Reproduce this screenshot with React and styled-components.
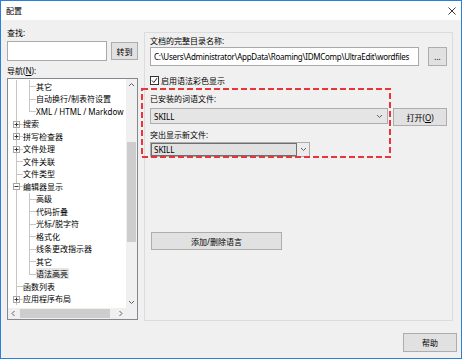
import React from 'react';
import styled, { createGlobalStyle } from 'styled-components';

const GlobalStyle = createGlobalStyle`
  html, body {
    margin: 0;
    padding: 0;
    background: #fff;
  }
  body {
    font-family: "Noto Sans", "Noto Sans CJK SC", sans-serif;
    font-size: 8px;
    color: #000;
  }
  * {
    box-sizing: border-box;
  }
`;

const Window = styled.div`
  width: 462px;
  height: 359px;
  border: 1px solid #2b7fd6;
  display: flex;
  flex-direction: column;
  background: #f0f0f0;
`;

const TitleBar = styled.div`
  height: 19px;
  background: #fff;
  display: flex;
  align-items: center;
  justify-content: space-between;
  padding: 0 5px;
`;

const Main = styled.div`
  display: flex;
  height: 301px;
  padding: 0 8px 0 6px;
`;

const LeftPane = styled.div`
  width: 131px;
  display: flex;
  flex-direction: column;
  padding-top: 7px;
`;

const FieldLabel = styled.div`
  height: 11px;
  line-height: 11px;
  white-space: nowrap;
  margin-top: ${(p) => p.$top || 0}px;
  u {
    text-decoration: underline;
  }
`;

const SearchRow = styled.div`
  display: flex;
  align-items: center;
  justify-content: space-between;
  margin-top: 3px;
`;

const TextBox = styled.div`
  width: ${(p) => p.$w}px;
  height: ${(p) => p.$h}px;
  border: 1px solid #a9a9a9;
  background: #fff;
  padding-left: 3px;
  display: flex;
  align-items: center;
  white-space: nowrap;
  overflow: hidden;
  letter-spacing: ${(p) => p.$tight ? '-0.27px' : 'normal'};
`;

const Button = styled.div`
  width: ${(p) => p.$w}px;
  height: ${(p) => p.$h || 18}px;
  margin-left: ${(p) => p.$left || 0}px;
  margin-top: ${(p) => p.$top || 0}px;
  background: #e1e1e1;
  border: 1px solid #adadad;
  display: flex;
  align-items: center;
  justify-content: center;
  white-space: nowrap;
  flex: none;
  u {
    text-decoration: underline;
  }
`;

const Tree = styled.div`
  margin-top: 2px;
  height: 242px;
  border: 1px solid #828790;
  background: #fff;
  display: grid;
  grid-template-columns: 1fr 11px;
  grid-template-rows: 1fr 11px;
  overflow: hidden;
`;

const TreeBody = styled.div`
  overflow: hidden;
  padding: 1px 0 0 2px;
`;

const TreeRow = styled.div`
  height: 12.5px;
  display: flex;
  align-items: center;
  white-space: nowrap;
`;

const Guide = styled.span`
  position: relative;
  width: 13px;
  height: 100%;
  flex: none;
  &::before {
    content: ${(p) => (p.$kind === 'blank' ? 'none' : "''")};
    position: absolute;
    left: 6px;
    top: 0;
    bottom: ${(p) => (p.$kind === 'end' ? '50%' : '0')};
    width: 1px;
    background: #c6c6c6;
  }
  &::after {
    content: ${(p) => (p.$kind === 'line' || p.$kind === 'blank' ? 'none' : "''")};
    position: absolute;
    left: 6px;
    right: 0;
    top: 6px;
    height: 1px;
    background: #c6c6c6;
  }
`;

const Expander = styled.span`
  position: absolute;
  z-index: 1;
  left: 3px;
  top: 3px;
  width: 7px;
  height: 7px;
  border: 1px solid #a5a5a5;
  background: #fff;
  display: flex;
  svg {
    display: block;
  }
`;

const NodeText = styled.span`
  padding: 0 1px 0 0;
  line-height: 11px;
  background: ${(p) => (p.$selected ? '#e6e6e6' : 'transparent')};
`;

const VScroll = styled.div`
  background: #f0f0f0;
  display: flex;
  flex-direction: column;
`;

const HScroll = styled.div`
  background: #f0f0f0;
  display: flex;
`;

const Arrow = styled.div`
  width: 11px;
  height: 11px;
  flex: none;
  display: flex;
  align-items: center;
  justify-content: center;
`;

const Track = styled.div`
  flex: 1;
  display: flex;
  flex-direction: ${(p) => (p.$vertical ? 'column' : 'row')};
  padding: ${(p) => (p.$vertical ? '0 1px' : '1px 0')};
`;

const Thumb = styled.div`
  background: #cdcdcd;
  ${(p) =>
    p.$vertical
      ? `margin-top: ${p.$offset}px; height: ${p.$size}px;`
      : `margin-left: ${p.$offset}px; width: ${p.$size}px;`}
`;

const Corner = styled.div`
  background: #f0f0f0;
`;

const RightPane = styled.div`
  margin-left: 6px;
  margin-top: 12px;
  width: 309px;
  height: 289px;
  border: 1px solid #dcdcdc;
  padding: 2px 5px 0 5px;
  display: flex;
  flex-direction: column;
`;

const PathRow = styled.div`
  display: flex;
  align-items: center;
  justify-content: space-between;
  margin-top: 1px;
`;

const CheckRow = styled.div`
  display: flex;
  align-items: center;
  gap: 2px;
  height: 10px;
  margin-top: 9px;
`;

const CheckBox = styled.span`
  width: 9px;
  height: 9px;
  border: 1px solid #333;
  background: #fff;
  display: flex;
  svg {
    display: block;
  }
`;

const Group = styled.div`
  position: relative;
  margin-top: 8px;
`;

const Annotation = styled.svg`
  position: absolute;
  left: -9px;
  top: -5px;
  pointer-events: none;
`;

const SelectRow = styled.div`
  display: flex;
  align-items: flex-start;
  justify-content: space-between;
  margin-top: 4px;
`;

const Select = styled.div`
  width: ${(p) => p.$w}px;
  height: ${(p) => p.$h}px;
  margin-top: ${(p) => p.$top || 0}px;
  background: #e5e5e5;
  border: 1px solid #adadad;
  display: flex;
  align-items: center;
  justify-content: space-between;
  padding: 0 4px 0 3px;
`;

const Combo = styled.div`
  width: 160px;
  height: 15px;
  margin-top: 2px;
  display: flex;
  border: 1px solid #adadad;
  background: #e5e5e5;
`;

const ComboField = styled.div`
  flex: 1;
  border: 1px solid #6f6f6f;
  background: #e1e1e1;
  display: flex;
  align-items: center;
  padding-left: 2px;
`;

const ComboArrow = styled.div`
  width: 12px;
  display: flex;
  align-items: center;
  justify-content: center;
  background: #ececec;
`;

const Footer = styled.div`
  display: flex;
  justify-content: flex-end;
  padding: 12px 4px 0 0;
`;

const Chevron = ({ dir = 'down', color = '#606060' }) => {
  const pts = {
    down: '1,2 3.5,4.5 6,2',
    up: '1,5 3.5,2.5 6,5',
    left: '4.5,1 2,3.5 4.5,6',
    right: '2.5,1 5,3.5 2.5,6',
  }[dir];
  return (
    <svg width="7" height="7" viewBox="0 0 7 7">
      <polyline points={pts} fill="none" stroke={color} strokeWidth="1" />
    </svg>
  );
};

const treeItems = [
  { guides: ['line', 'tee'], text: '其它' },
  { guides: ['line', 'tee'], text: '自动换行/制表符设置' },
  { guides: ['line', 'end'], text: 'XML / HTML / Markdow' },
  { guides: ['tee'], expander: '+', text: '搜索' },
  { guides: ['tee'], expander: '+', text: '拼写检查器' },
  { guides: ['tee'], expander: '+', text: '文件处理' },
  { guides: ['tee'], text: '文件关联' },
  { guides: ['tee'], text: '文件类型' },
  { guides: ['tee'], expander: '-', text: '编辑器显示' },
  { guides: ['line', 'tee'], text: '高级' },
  { guides: ['line', 'tee'], text: '代码折叠' },
  { guides: ['line', 'tee'], text: '光标/脱字符' },
  { guides: ['line', 'tee'], text: '格式化' },
  { guides: ['line', 'tee'], text: '线条更改指示器' },
  { guides: ['line', 'tee'], text: '其它' },
  { guides: ['line', 'end'], text: '语法高亮', selected: true },
  { guides: ['tee'], text: '函数列表' },
  { guides: ['tee'], expander: '+', text: '应用程序布局' },
];

const ExpanderIcon = ({ sign }) => (
  <Expander>
    <svg width="5" height="5" viewBox="0 0 5 5">
      <line x1="0.5" y1="2.5" x2="4.5" y2="2.5" stroke="#3a3a3a" strokeWidth="1" />
      {sign === '+' && <line x1="2.5" y1="0.5" x2="2.5" y2="4.5" stroke="#3a3a3a" strokeWidth="1" />}
    </svg>
  </Expander>
);

const App = () => {
  return (
    <>
      <GlobalStyle />
      <Window>
        <TitleBar>
          <span>配置</span>
          <svg width="8" height="8" viewBox="0 0 8 8">
            <path d="M0.5 0.5 L7.5 7.5 M7.5 0.5 L0.5 7.5" stroke="#222" strokeWidth="0.9" />
          </svg>
        </TitleBar>

        <Main>
          <LeftPane>
            <FieldLabel>查找:</FieldLabel>
            <SearchRow>
              <TextBox $w={100} $h={20} />
              <Button $w={27} $h={18}>转到</Button>
            </SearchRow>
            <FieldLabel $top={4}>
              导航(<u>N</u>):
            </FieldLabel>
            <Tree>
              <TreeBody>
                {treeItems.map((item, i) => (
                  <TreeRow key={i}>
                    {item.guides.map((g, j) => (
                      <Guide key={j} $kind={g}>
                        {item.expander && j === item.guides.length - 1 && (
                          <ExpanderIcon sign={item.expander} />
                        )}
                      </Guide>
                    ))}
                    <NodeText $selected={item.selected}>{item.text}</NodeText>
                  </TreeRow>
                ))}
              </TreeBody>
              <VScroll>
                <Arrow>
                  <Chevron dir="up" />
                </Arrow>
                <Track $vertical>
                  <Thumb $vertical $offset={52} $size={100} />
                </Track>
                <Arrow>
                  <Chevron dir="down" />
                </Arrow>
              </VScroll>
              <HScroll>
                <Arrow>
                  <Chevron dir="left" />
                </Arrow>
                <Track>
                  <Thumb $offset={1} $size={90} />
                </Track>
                <Arrow>
                  <Chevron dir="right" />
                </Arrow>
              </HScroll>
              <Corner />
            </Tree>
          </LeftPane>

          <RightPane>
            <FieldLabel>文档的完整目录名称:</FieldLabel>
            <PathRow>
              <TextBox $w={269} $h={19} $tight>
                {'C:\\Users\\Administrator\\AppData\\Roaming\\IDMComp\\UltraEdit\\wordfiles'}
              </TextBox>
              <Button $w={19} $h={19}>...</Button>
            </PathRow>
            <CheckRow>
              <CheckBox>
                <svg width="7" height="7" viewBox="0 0 7 7">
                  <polyline points="1,3.5 2.8,5.5 6,1.2" fill="none" stroke="#222" strokeWidth="1" />
                </svg>
              </CheckBox>
              <span>启用语法彩色显示</span>
            </CheckRow>

            <Group>
              <Annotation width="250" height="70" viewBox="0 0 250 70">
                <rect
                  x="1"
                  y="1"
                  width="248"
                  height="68"
                  fill="none"
                  stroke="#e8353b"
                  strokeWidth="2"
                  strokeDasharray="6 3"
                />
              </Annotation>
              <FieldLabel>已安装的词语文件:</FieldLabel>
              <SelectRow>
                <Select $w={238} $h={16}>
                  <span>SKILL</span>
                  <Chevron dir="down" />
                </Select>
                <Button $w={54} $h={18}>
                  打开(<u>O</u>)
                </Button>
              </SelectRow>
              <FieldLabel $top={3}>突出显示新文件:</FieldLabel>
              <Combo>
                <ComboField>SKILL</ComboField>
                <ComboArrow>
                  <Chevron dir="down" />
                </ComboArrow>
              </Combo>
            </Group>

            <Button $w={131} $h={18} $left={1} $top={75}>
              添加/删除语言
            </Button>
          </RightPane>
        </Main>

        <Footer>
          <Button $w={54} $h={19}>帮助</Button>
        </Footer>
      </Window>
    </>
  );
};

export default App;
